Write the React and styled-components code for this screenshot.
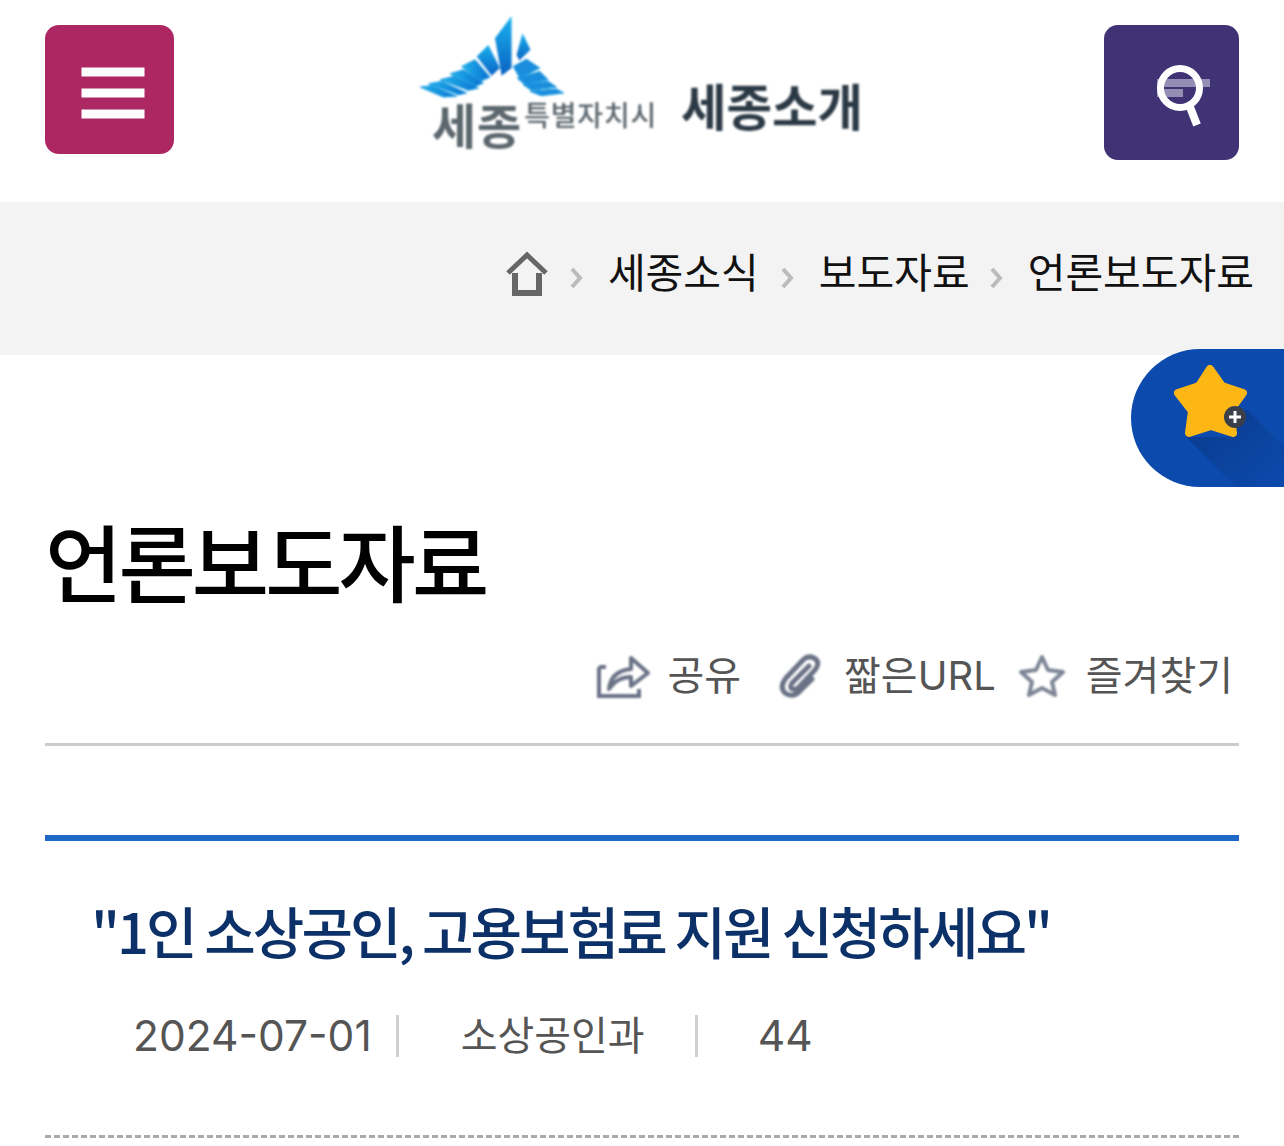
import React from 'react';
import styled, { createGlobalStyle } from 'styled-components';

const GlobalStyle = createGlobalStyle`
  html, body { margin: 0; padding: 0; background: #fff; overflow-x: hidden; }
  body { font-family: "Noto Sans CJK KR", "Noto Sans", sans-serif; }
`;

const Page = styled.div`
  position: relative;
  width: 1284px;
  height: 1146px;
  overflow: hidden;
`;

const Header = styled.header`
  height: 202px;
  box-sizing: border-box;
  padding: 25px 45px 0;
  display: flex;
  justify-content: space-between;
  align-items: flex-start;
`;

const SquareButton = styled.button`
  width: ${(p) => p.$size}px;
  height: ${(p) => p.$size}px;
  background: ${(p) => p.$bg};
  border: 0;
  border-radius: 14px;
  padding: 0;
  display: flex;
  align-items: center;
  justify-content: center;
`;

const BrandLink = styled.a`
  display: flex;
  align-items: flex-end;
  margin: -10px 0 0 5px;
  filter: blur(0.8px);
`;

const Emblem = styled.div`
  display: flex;
  flex-direction: column;
  width: 236px;
`;

const EmblemArt = styled.svg`
  display: block;
  width: 145px;
  height: 83px;
`;

const EmblemLabel = styled.div`
  display: flex;
  align-items: flex-start;
  margin: 1px 0 0 12px;
  color: #5b666d;
  white-space: nowrap;
`;

const CityName = styled.span`
  font-size: 48px;
  font-weight: 700;
  line-height: 48px;
  letter-spacing: 1px;
`;

const CityKind = styled.span`
  font-size: 28px;
  font-weight: 500;
  line-height: 30px;
  letter-spacing: 0.8px;
  margin-left: 2px;
`;

const BrandTitle = styled.span`
  font-size: 49.5px;
  font-weight: 700;
  line-height: 56px;
  color: #2b3945;
  margin: 0 0 14px 25px;
  white-space: nowrap;
`;

const Breadcrumb = styled.nav`
  height: 153px;
  box-sizing: border-box;
  background: #f3f3f3;
  padding: 0 30px 10px 0;
  display: flex;
  justify-content: flex-end;
  align-items: center;
`;

const HomeIcon = styled.svg`
  flex: none;
  filter: blur(0.4px);
`;

const CrumbText = styled.span`
  font-size: 41px;
  line-height: 50px;
  color: #111;
  margin-bottom: 8px;
  white-space: nowrap;
`;

const CrumbSep = styled.svg`
  width: 13px;
  height: 22px;
  margin: 8px 25px 0 ${(p) => p.$left}px;
  flex: none;
`;

const FavBadge = styled.div`
  position: absolute;
  top: 349px;
  right: 0;
  width: 153px;
  height: 138px;
  border-radius: 69px 0 0 69px;
  overflow: hidden;
  background: #0c4aad;
`;

const FavArt = styled.svg`
  display: block;
  width: 153px;
  height: 138px;
  filter: blur(0.5px);
`;

const Content = styled.main`
  padding: 0 45px;
`;

const PageTitle = styled.h1`
  margin: 155px 0 0;
  font-size: 84px;
  line-height: 100px;
  font-weight: 500;
  color: #000;
  letter-spacing: -3.9px;
  white-space: nowrap;
`;

const ActionBar = styled.div`
  height: 114px;
  margin-top: 22px;
  box-sizing: border-box;
  padding: 0 6px 23px 0;
  border-bottom: 3px solid #cccccc;
  display: flex;
  justify-content: flex-end;
  align-items: center;
`;

const ActionItem = styled.a`
  display: flex;
  align-items: center;
  gap: ${(p) => p.$gap}px;
  margin-left: ${(p) => p.$left}px;
  font-family: Inter, "Noto Sans CJK KR", sans-serif;
  font-size: 40px;
  line-height: 50px;
  color: #555;
  white-space: nowrap;
`;

const ActionIcon = styled.svg`
  display: block;
  flex: none;
  filter: blur(0.8px);
`;

const Article = styled.section`
  margin-top: 89px;
  border-top: 6px solid #1e69c6;
`;

const ArticleTitle = styled.h2`
  margin: 54px 0 0 46px;
  font-size: 56px;
  line-height: 70px;
  font-weight: 500;
  color: #0c3068;
  letter-spacing: -2.95px;
  white-space: nowrap;
`;

const MetaRow = styled.div`
  height: 157px;
  margin-top: 16px;
  box-sizing: border-box;
  padding: 34px 0 0 88px;
  display: flex;
  align-items: flex-start;
  border-bottom: 3px dashed #aaaaaa;
  font-family: Inter, "Noto Sans CJK KR", sans-serif;
`;

const MetaItem = styled.span`
  height: 42px;
  line-height: 42px;
  font-size: ${(p) => p.$size}px;
  color: #555;
  padding-right: ${(p) => p.$pad}px;
  margin-right: ${(p) => p.$gap}px;
  border-right: ${(p) => (p.$divider ? '3px solid #d0d0d0' : '0')};
  white-space: nowrap;
`;

const Chevron = ({ left }) => (
  <CrumbSep $left={left} viewBox="0 0 13 22">
    <path d="M2 2 L10 11 L2 20" fill="none" stroke="#bbb" strokeWidth="4" />
  </CrumbSep>
);

const App = () => {
  return (
    <Page>
      <GlobalStyle />
      <Header>
        <SquareButton $size={129} $bg="#ad2763" aria-label="메뉴">
          <svg width="72" height="60" viewBox="0 0 72 60">
            <rect x="7.5" y="7.5" width="63" height="9" fill="#fff" />
            <rect x="7.5" y="28.5" width="63" height="9" fill="#fff" />
            <rect x="7.5" y="49.5" width="63" height="9" fill="#fff" />
          </svg>
        </SquareButton>

        <BrandLink>
          <Emblem>
            <EmblemArt viewBox="60 45 435 250">
              <defs>
                <linearGradient id="wing" x1="0" y1="0" x2="0" y2="1">
                  <stop offset="0" stopColor="#19b2ee" />
                  <stop offset="1" stopColor="#0a62c4" />
                </linearGradient>
                <linearGradient id="wingSide" x1="0" y1="0" x2="1" y2="0">
                  <stop offset="0" stopColor="#1fb4ec" />
                  <stop offset="1" stopColor="#0b6fcf" />
                </linearGradient>
              </defs>
              <polygon fill="url(#wing)" points="285,115 335,48 335,205 305,228" />
              <polygon fill="url(#wing)" points="368,100 392,150 358,182 350,165" />
              <polygon fill="url(#wing)" points="230,170 265,135 300,205 275,228" />
              <g fill="url(#wingSide)" stroke="#1a9be2" strokeWidth="3">
                <polygon points="185,200 225,180 270,232 240,245" />
                <polygon points="150,222 190,210 250,250 225,260" />
                <polygon points="120,240 160,230 235,265 205,272" />
                <polygon points="85,252 125,245 200,280 175,285" />
                <polygon points="60,262 95,258 170,290 130,292" />
              </g>
              <g fill="#1a8ddc" stroke="#1a9be2" strokeWidth="3">
                <polygon points="380,178 420,205 360,235 340,200" />
                <polygon points="420,215 445,240 375,255 352,235" />
                <polygon points="445,245 470,262 395,272 370,255" />
                <polygon points="470,268 492,280 425,288 390,275" />
              </g>
            </EmblemArt>
            <EmblemLabel>
              <CityName>세종</CityName>
              <CityKind>특별자치시</CityKind>
            </EmblemLabel>
          </Emblem>
          <BrandTitle>세종소개</BrandTitle>
        </BrandLink>

        <SquareButton $size={135} $bg="#3f3275" aria-label="검색">
          <svg width="135" height="135" viewBox="0 0 135 135">
            <rect x="53" y="54" width="53" height="8" fill="#fff" opacity="0.45" />
            <rect x="53" y="64" width="26" height="8" fill="#fff" opacity="0.45" />
            <circle cx="76" cy="63" r="19.5" fill="none" stroke="#fff" strokeWidth="7" />
            <line x1="86" y1="82" x2="93" y2="100" stroke="#fff" strokeWidth="8" />
          </svg>
        </SquareButton>
      </Header>

      <Breadcrumb>
        <HomeIcon width="44" height="46" viewBox="0 0 44 46">
          <path d="M3 22 L22 4 L41 22" fill="none" stroke="#666" strokeWidth="5" />
          <path d="M10 22 V42 H34 V22" fill="none" stroke="#666" strokeWidth="6" />
        </HomeIcon>
        <Chevron left={21} />
        <CrumbText>세종소식</CrumbText>
        <Chevron left={22} />
        <CrumbText>보도자료</CrumbText>
        <Chevron left={20} />
        <CrumbText>언론보도자료</CrumbText>
      </Breadcrumb>

      <FavBadge>
        <FavArt viewBox="0 0 153 138">
          <defs>
            <linearGradient id="favShadow" x1="0" y1="0" x2="1" y2="1">
              <stop offset="0" stopColor="#0a3a8c" />
              <stop offset="1" stopColor="#0c4aad" />
            </linearGradient>
          </defs>
          <polygon points="55,88 100,88 115,60 153,98 153,138 105,138" fill="url(#favShadow)" />
          <polygon
            points="79,20 91,37 112,44 99,62 102,84 80,77 58,84 61,62 47,44 68,37"
            fill="#fdb714"
            stroke="#fdb714"
            strokeWidth="8"
            strokeLinejoin="round"
          />
          <circle cx="104" cy="68" r="11" fill="#3a3f4a" />
          <path d="M104 62 V74 M98 68 H110" stroke="#fff" strokeWidth="3" />
        </FavArt>
      </FavBadge>

      <Content>
        <PageTitle>언론보도자료</PageTitle>

        <ActionBar>
          <ActionItem $gap={16} $left={0}>
            <ActionIcon width="54" height="46" viewBox="0 0 54 46">
              <path d="M2 14 V43 H42 V36 M2 14 H9" fill="none" stroke="#6a7286" strokeWidth="4" />
              <path
                d="M12 36 Q14 18 34 16 V5 L51 20 L34 33 V24 Q20 24 12 36 Z"
                fill="none"
                stroke="#6a7286"
                strokeWidth="4"
                strokeLinejoin="round"
              />
            </ActionIcon>
            공유
          </ActionItem>
          <ActionItem $gap={21} $left={38}>
            <ActionIcon width="44" height="44" viewBox="0 0 44 44">
              <path
                d="M30 12 L13 29 Q10 34 14 35 Q17 36 20 33 L36 16 Q42 8 35 4 Q29 1 24 6 L7 24 Q0 33 6 39 Q13 44 20 38 L33 25"
                fill="none"
                stroke="#6a7286"
                strokeWidth="5"
                strokeLinecap="round"
              />
            </ActionIcon>
            짧은URL
          </ActionItem>
          <ActionItem $gap={20} $left={22}>
            <ActionIcon width="48" height="44" viewBox="0 0 48 44">
              <polygon
                points="24,3 30,16 45,18 34,28 37,41 24,34 11,41 14,28 3,18 18,16"
                fill="none"
                stroke="#7d8596"
                strokeWidth="4"
                strokeLinejoin="round"
              />
            </ActionIcon>
            즐겨찾기
          </ActionItem>
        </ActionBar>

        <Article>
          <ArticleTitle>"1인 소상공인, 고용보험료 지원 신청하세요"</ArticleTitle>
          <MetaRow>
            <MetaItem $size={42.5} $pad={24} $gap={62} $divider>2024-07-01</MetaItem>
            <MetaItem $size={40} $pad={50} $gap={60} $divider>소상공인과</MetaItem>
            <MetaItem $size={42.5} $pad={0} $gap={0}>44</MetaItem>
          </MetaRow>
        </Article>
      </Content>
    </Page>
  );
};

export default App;
